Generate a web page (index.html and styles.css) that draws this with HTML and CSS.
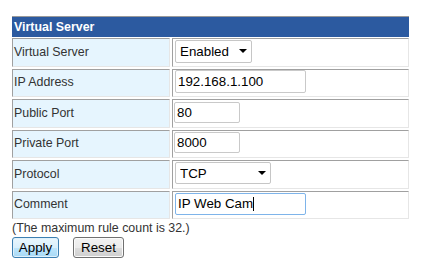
FILE: index.html
```html
<!DOCTYPE html>
<html>
<head>
<meta charset="utf-8">
<link rel="stylesheet" href="styles.css">
</head>
<body>
<div class="panel">
  <div class="title">Virtual Server</div>
  <div class="rows">
    <div class="label">Virtual Server</div>
    <div class="value">
      <span class="sel-wrap">
        <select class="sel sel-enabled"><option>Enabled</option></select>
        <span class="arrow"></span>
      </span>
    </div>
    <div class="label">IP Address</div>
    <div class="value"><input class="txt txt-long" type="text" value="192.168.1.100"></div>
    <div class="label">Public Port</div>
    <div class="value"><input class="txt txt-port" type="text" value="80"></div>
    <div class="label">Private Port</div>
    <div class="value"><input class="txt txt-port" type="text" value="8000"></div>
    <div class="label">Protocol</div>
    <div class="value">
      <span class="sel-wrap">
        <select class="sel sel-proto"><option>TCP</option></select>
        <span class="arrow"></span>
      </span>
    </div>
    <div class="label">Comment</div>
    <div class="value">
      <span class="in-wrap">
        <input class="txt txt-long txt-focus" type="text" value="IP Web Cam">
        <span class="caret"></span>
      </span>
    </div>
  </div>
  <div class="note">(The maximum rule count is 32.)</div>
  <div class="buttons">
    <button class="btn btn-apply" type="button">Apply</button>
    <button class="btn btn-reset" type="button">Reset</button>
  </div>
</div>
</body>
</html>
```
FILE: styles.css
```css
html, body {
  margin: 0;
  padding: 0;
  background: #ffffff;
}
body {
  font-family: "Liberation Sans", Arial, sans-serif;
  font-size: 12.4px;
  color: #333333;
}
.panel {
  margin: 16px 0 0 12px;
  width: 397px;
}
.title {
  border-top: 1px solid #9a9a9a;
  background: #2c5aa0;
  color: #ffffff;
  font-weight: bold;
  height: 20px;
  line-height: 20px;
  padding-left: 2px;
  margin-bottom: 1px;
}
.rows {
  display: grid;
  grid-template-columns: 158px 237px;
  grid-auto-rows: 28.5px;
  column-gap: 2px;
  row-gap: 2px;
}
.label, .value {
  box-sizing: border-box;
  border: 1px solid;
  border-color: #a0a0a0 #e6e6e6 #e6e6e6 #a0a0a0;
  display: flex;
  align-items: center;
}
.label {
  background: #e6f5fe;
  padding: 0 0 1px 1px;
}
.value {
  background: #ffffff;
  padding: 0 0 2px 2px;
}
.sel-wrap, .in-wrap {
  position: relative;
  display: inline-flex;
}
.sel {
  -webkit-appearance: none;
  appearance: none;
  box-sizing: border-box;
  height: 23px;
  border: 1px solid #c6c6c6;
  border-radius: 2px;
  background: #ffffff;
  font-family: "Liberation Sans", Arial, sans-serif;
  font-size: 13.33px;
  color: #000000;
  padding: 0 0 0 4px;
  margin: 0;
  outline: none;
}
.sel-enabled { width: 77px; }
.sel-proto { width: 96px; height: 22px; }
.arrow {
  position: absolute;
  right: 5px;
  top: 50%;
  margin-top: -2px;
  width: 0;
  height: 0;
  border-left: 4px solid transparent;
  border-right: 4px solid transparent;
  border-top: 4px solid #000000;
  pointer-events: none;
}
.txt {
  box-sizing: border-box;
  height: 23px;
  border: 1px solid #c9c9c9;
  border-radius: 2px;
  background: #ffffff;
  font-family: "Liberation Sans", Arial, sans-serif;
  font-size: 13.33px;
  color: #000000;
  padding: 0 0 0 2px;
  margin: 0;
  outline: none;
}
.txt-long { width: 131px; }
.txt-port { width: 66px; height: 21px; margin-left: -1px; }
.txt-focus {
  height: 22px;
  border-color: #7eb4ea;
}
.caret {
  position: absolute;
  left: 78px;
  top: 4px;
  width: 1px;
  height: 14px;
  background: #000000;
}
.note {
  margin-top: 2px;
  line-height: 14px;
}
.buttons {
  display: flex;
  align-items: flex-start;
  gap: 14px;
  margin-top: 2px;
}
.btn {
  box-sizing: border-box;
  font-family: "Liberation Sans", Arial, sans-serif;
  font-size: 13.33px;
  color: #000000;
  padding: 0;
  margin: 0;
  border-radius: 3px;
}
.btn-apply {
  width: 47px;
  height: 21px;
  border: 1px solid #3c7fb1;
  background: linear-gradient(#eaf6fd 0%, #d9f0fc 50%, #bee6fd 51%, #a7d9f5 100%);
  box-shadow: inset 0 0 0 1px #dff1fc;
}
.btn-reset {
  width: 51px;
  height: 21px;
  border: 1px solid #707070;
  background: linear-gradient(#f2f2f2 0%, #ebebeb 50%, #dddddd 51%, #cfcfcf 100%);
  box-shadow: inset 0 0 0 1px #fbfbfb;
}
```
